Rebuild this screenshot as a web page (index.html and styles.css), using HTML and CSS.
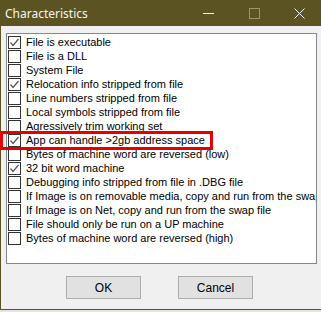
FILE: index.html
```html
<!DOCTYPE html>
<html><head>
    <title>Characteristics</title>
    <meta name="viewport" content="width=device-width, initial-scale=1">
    <link rel="stylesheet" href="styles.css">
    </head>
    <body>
    <div class="window">
        <div class="titlebar">
            <span class="title">Characteristics</span>
            <div class="caption">
                <span class="cbtn"><svg width="11" height="11" viewBox="0 0 11 11"><line x1="0" y1="5.5" x2="11" y2="5.5" stroke="#f2f2f2" stroke-width="1"/></svg></span>
                <span class="cbtn"><svg width="11" height="11" viewBox="0 0 11 11"><rect x="0.5" y="0.5" width="10" height="10" fill="none" stroke="#9a9670" stroke-width="1"/></svg></span>
                <span class="cbtn close"><svg width="11" height="11" viewBox="0 0 11 11"><path d="M0.5 0.5 L10.5 10.5 M10.5 0.5 L0.5 10.5" stroke="#f2f2f2" stroke-width="1"/></svg></span>
            </div>
        </div>
        <div class="list">
            <div class="row"><span class="box checked"></span>File is executable</div>
            <div class="row"><span class="box"></span>File is a DLL</div>
            <div class="row"><span class="box"></span>System File</div>
            <div class="row"><span class="box checked"></span>Relocation info stripped from file</div>
            <div class="row"><span class="box"></span>Line numbers stripped from file</div>
            <div class="row"><span class="box"></span>Local symbols stripped from file</div>
            <div class="row"><span class="box"></span>Agressively trim working set</div>
            <div class="row"><span class="box checked"></span>App can handle &gt;2gb address space</div>
            <div class="row"><span class="box"></span>Bytes of machine word are reversed (low)</div>
            <div class="row"><span class="box checked"></span>32 bit word machine</div>
            <div class="row"><span class="box"></span>Debugging info stripped from file in .DBG file</div>
            <div class="row"><span class="box"></span>If Image is on removable media, copy and run from the swap file</div>
            <div class="row"><span class="box"></span>If Image is on Net, copy and run from the swap file</div>
            <div class="row"><span class="box"></span>File should only be run on a UP machine</div>
            <div class="row"><span class="box"></span>Bytes of machine word are reversed (high)</div>
        </div>
        <div class="buttons">
            <button class="button">OK</button>
            <button class="button">Cancel</button>
        </div>
        <div class="highlight"></div>
    </div>
    <div class="below"></div>
    </body>
    </html>
```
FILE: styles.css
```css
html, body {
    margin: 0;
    padding: 0;
    background-color: #f0f0f0;
    overflow: hidden;
}
body {
    width: 321px;
    height: 312px;
    font-family: "Liberation Sans", Arial, sans-serif;
}
.window {
    position: relative;
    height: 309px;
    border-left: 1px solid #5b5321;
    border-bottom: 1px solid #5b5321;
    background-color: #f0f0f0;
}
.titlebar {
    display: flex;
    align-items: center;
    height: 26px;
    background-color: #5b5321;
}
.title {
    flex: 1;
    padding-left: 4px;
    color: #f4f4f4;
    font-family: "Noto Sans", sans-serif;
    font-size: 12px;
}
.caption {
    display: flex;
    height: 26px;
}
.cbtn {
    display: flex;
    align-items: center;
    justify-content: center;
    width: 46px;
    height: 26px;
}
.cbtn.close {
    width: 44px;
}
.list {
    margin: 7px 4px 0 5px;
    height: 228px;
    border: 1px solid #828790;
    background-color: #fff;
    padding-top: 1px;
    overflow: hidden;
}
.row {
    display: flex;
    align-items: center;
    height: 14px;
    font-size: 11px;
    color: #000;
    white-space: nowrap;
}
.box {
    flex: none;
    width: 11px;
    height: 11px;
    margin: 0 5px 0 1px;
    border: 1px solid #333;
    background-color: #fff;
}
.box.checked {
    background: #fff url("data:image/svg+xml,%3Csvg xmlns='http://www.w3.org/2000/svg' width='11' height='11'%3E%3Cpolyline points='1.5,5.5 4,8.5 9.5,2' fill='none' stroke='%23555' stroke-width='1.2'/%3E%3C/svg%3E") no-repeat;
}
.buttons {
    display: flex;
    gap: 37px;
    margin: 12px 0 0 65px;
}
.button {
    width: 75px;
    height: 23px;
    background-color: #e1e1e1;
    border: 1px solid #adadad;
    border-radius: 0;
    font-family: "Liberation Sans", Arial, sans-serif;
    font-size: 12px;
    color: #000;
    padding: 0;
}
.highlight {
    position: absolute;
    left: -1px;
    top: 131px;
    width: 207px;
    height: 13px;
    border: 3px solid #e60000;
}
.below {
    height: 2px;
    background-color: #e8e6dc;
}
```
